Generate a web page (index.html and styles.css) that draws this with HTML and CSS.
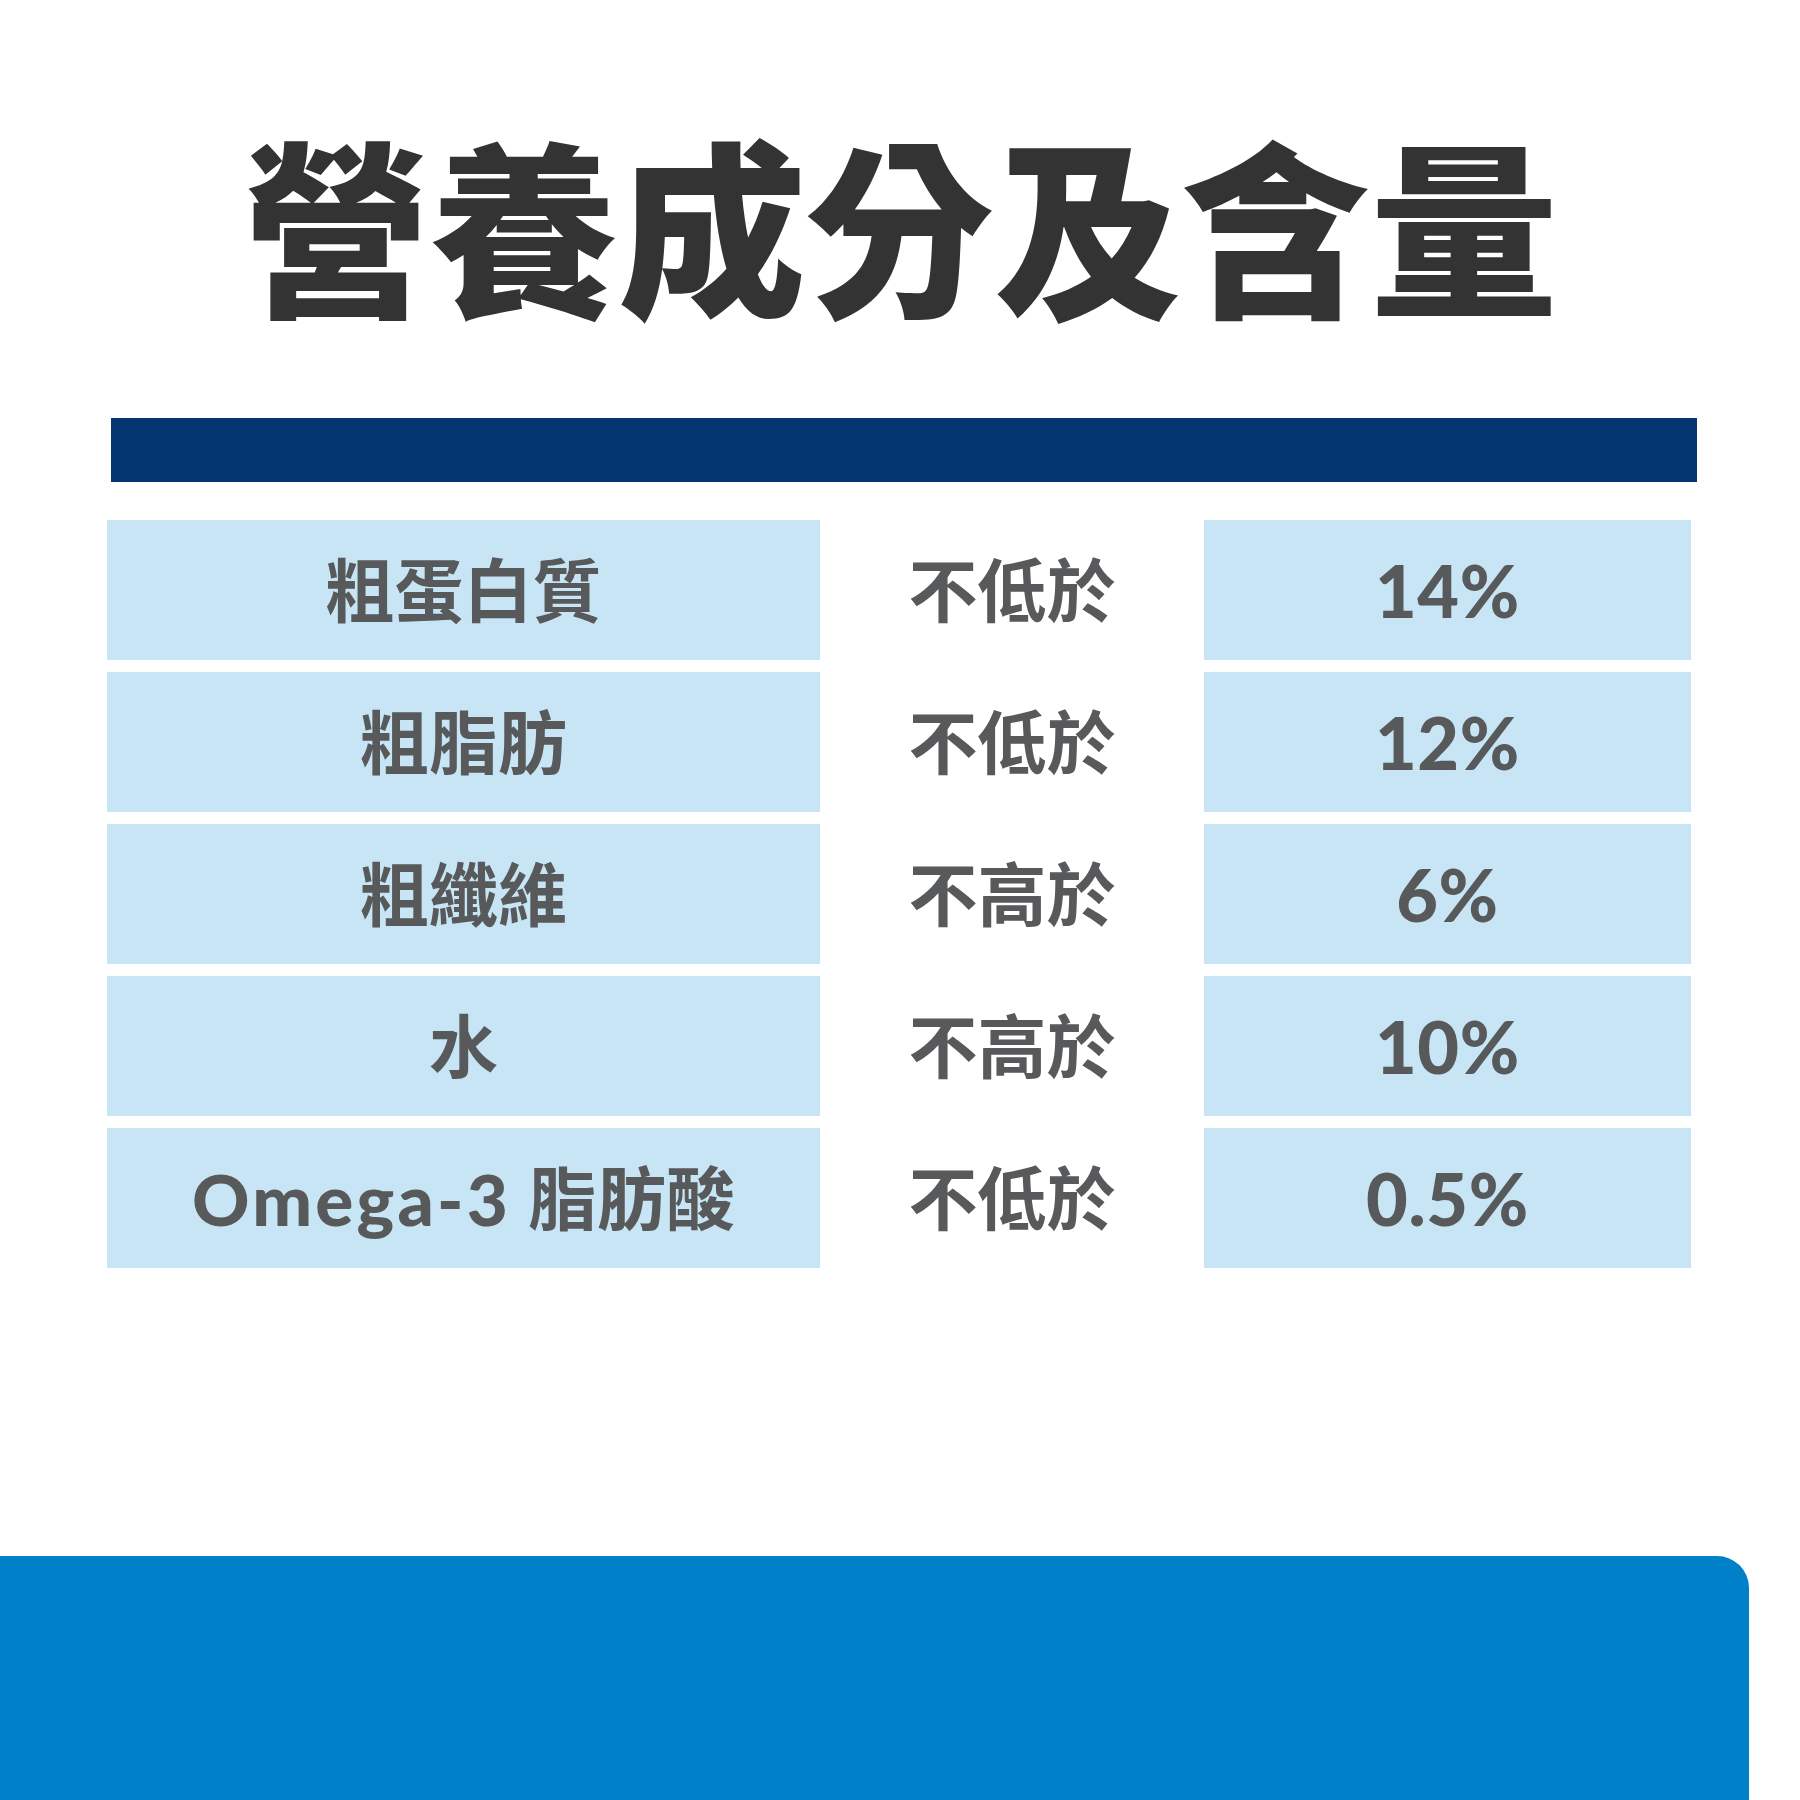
FILE: index.html
```html
<!DOCTYPE html>
<html lang="zh-Hant">
<head>
<meta charset="utf-8">
<title>營養成分及含量</title>
<link rel="stylesheet" href="styles.css">
</head>
<body>
<div class="page">
  <header class="header">
    <h1 class="title">營養成分及含量</h1>
  </header>
  <div class="bar"></div>
  <div class="table">
    <div class="cell name">粗蛋白質</div><div class="cell mid">不低於</div><div class="cell val">14%</div>
    <div class="cell name">粗脂肪</div><div class="cell mid">不低於</div><div class="cell val">12%</div>
    <div class="cell name">粗纖維</div><div class="cell mid">不高於</div><div class="cell val">6%</div>
    <div class="cell name">水</div><div class="cell mid">不高於</div><div class="cell val">10%</div>
    <div class="cell name"><span class="latin">Omega-3</span>&nbsp;脂肪酸</div><div class="cell mid">不低於</div><div class="cell val">0.5%</div>
  </div>
  <div class="footer"></div>
</div>
</body>
</html>
```
FILE: styles.css
```css
html, body {
  margin: 0;
  padding: 0;
  background: #ffffff;
}
.page {
  width: 1800px;
  height: 1800px;
  overflow: hidden;
  display: flex;
  flex-direction: column;
}
.header {
  height: 418px;
  box-sizing: border-box;
  padding-top: 126px;
}
.title {
  margin: 0;
  text-align: center;
  font-family: "Noto Sans CJK TC", "Noto Sans CJK SC", sans-serif;
  font-weight: 900;
  font-size: 188px;
  line-height: 1;
  color: #333333;
  letter-spacing: 0;
}
.bar {
  margin-left: 111px;
  width: 1586px;
  height: 64px;
  background: #03356e;
}
.table {
  margin-top: 38px;
  margin-left: 107px;
  display: grid;
  grid-template-columns: 713px 384px 487px;
  grid-auto-rows: 140px;
  row-gap: 12px;
}
.cell {
  display: flex;
  align-items: center;
  justify-content: center;
  font-family: Lato, "Noto Sans CJK TC", sans-serif;
  font-weight: 700;
  font-size: 69px;
  color: #58595b;
  line-height: 1;
  white-space: pre;
}
.name, .val {
  background: #c7e5f4;
}
.latin {
  font-size: 71px;
  font-weight: 900;
  letter-spacing: 0.045em;
}
.val {
  font-size: 72px;
  font-weight: 900;
  letter-spacing: 0.01em;
}
.footer {
  margin-top: 288px;
  width: 1749px;
  height: 244px;
  background: #0080c9;
  border-top-right-radius: 32px;
}
```
